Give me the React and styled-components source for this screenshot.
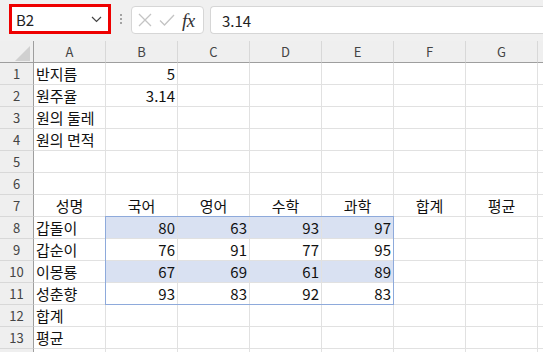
import React from 'react';
import styled, { createGlobalStyle } from 'styled-components';

const GlobalStyle = createGlobalStyle`
  html, body {
    margin: 0;
    padding: 0;
    background: #f0f0f0;
    overflow: hidden;
  }
  * { box-sizing: border-box; }
`;

const FONT = `"Segoe UI", "Noto Sans CJK KR", "Noto Sans", sans-serif`;

const Page = styled.div`
  width: 543px;
  height: 352px;
  overflow: hidden;
  font-family: ${FONT};
`;

const Toolbar = styled.div`
  height: 41px;
  display: flex;
  align-items: flex-start;
  padding: 4px 0 0 9px;
  background: #f0f0f0;
`;

const NameBox = styled.div`
  width: 102px;
  height: 30px;
  border: 3px solid #ee0000;
  background: #fff;
  display: flex;
  align-items: center;
  justify-content: space-between;
  padding: 0 6px 0 4px;
  font-size: 15px;
  color: #222;
`;

const Dots = styled.div`
  width: 20px;
  height: 30px;
  display: flex;
  flex-direction: column;
  align-items: center;
  justify-content: center;
  gap: 2px;
  span {
    width: 2px;
    height: 2px;
    background: #8a8a8a;
    border-radius: 1px;
  }
`;

const ButtonGroup = styled.div`
  width: 73px;
  height: 28px;
  margin-top: 2px;
  border: 1px solid #d6d6d6;
  border-radius: 4px;
  background: #fff;
  display: flex;
  align-items: center;
  padding: 0 4px 0 6px;
  gap: 7px;
`;

const Fx = styled.span`
  font-family: "Liberation Serif", "DejaVu Serif", serif;
  font-style: italic;
  font-size: 19px;
  color: #333;
  margin-left: 0;
  letter-spacing: -0.5px;
  line-height: 1;
`;

const FormulaInput = styled.div`
  flex: 1;
  height: 28px;
  margin: 2px 0 0 6px;
  border: 1px solid #d6d6d6;
  border-right: none;
  border-radius: 4px 0 0 4px;
  background: #fff;
  display: flex;
  align-items: center;
  padding-left: 11px;
  font-size: 15px;
  color: #222;
`;

const GridWrap = styled.div`
  position: relative;
  background: #fff;
`;

const Grid = styled.div`
  display: grid;
  grid-template-columns: 34px repeat(8, 72px);
  grid-auto-rows: 22px;
`;

const Corner = styled.div`
  background: #efefef;
  border-right: 1px solid #9e9e9e;
  border-bottom: 1px solid #9e9e9e;
  position: relative;
  svg { position: absolute; right: 3px; bottom: 1px; }
`;

const ColHead = styled.div`
  background: #efefef;
  border-bottom: 1px solid #9e9e9e;
  border-right: 1px solid #d8d8d8;
  display: flex;
  align-items: center;
  justify-content: center;
  font-size: 13px;
  color: #444;
`;

const RowHead = styled.div`
  background: #efefef;
  border-right: 1px solid #9e9e9e;
  border-bottom: 1px solid #d8d8d8;
  display: flex;
  align-items: center;
  justify-content: center;
  font-size: 13px;
  color: #444;
`;

const Cell = styled.div`
  background: ${p => (p.$band ? '#d9e1f2' : '#fff')};
  border-right: 1px solid #e1e1e1;
  border-bottom: 1px solid #e1e1e1;
  display: flex;
  align-items: center;
  justify-content: ${p => (p.$align === 'right' ? 'flex-end' : p.$align === 'center' ? 'center' : 'flex-start')};
  padding: 0 2px 0 2px;
  font-size: 15px;
  color: #111;
  white-space: nowrap;
  overflow: visible;
  line-height: 21px;
`;

const Selection = styled.div`
  position: absolute;
  left: 105px;
  top: 175px;
  width: 289px;
  height: 89px;
  border: 1px solid #8eaadb;
  pointer-events: none;
`;

const cols = ['A', 'B', 'C', 'D', 'E', 'F', 'G', ''];

const rows = [
  ['반지름', 5],
  ['원주율', 3.14],
  ['원의 둘레'],
  ['원의 면적'],
  [],
  [],
  ['성명', '국어', '영어', '수학', '과학', '합계', '평균'],
  ['갑돌이', 80, 63, 93, 97],
  ['갑순이', 76, 91, 77, 95],
  ['이몽룡', 67, 69, 61, 89],
  ['성춘향', 93, 83, 92, 83],
  ['합계'],
  ['평균'],
  [],
];

const Chevron = () => (
  <svg width="11" height="7" viewBox="0 0 11 7">
    <path d="M1 1 L5.5 5.5 L10 1" fill="none" stroke="#444" strokeWidth="1.2" />
  </svg>
);

const App = () => {
  return (
    <Page>
      <GlobalStyle />
      <Toolbar>
        <NameBox>
          <span>B2</span>
          <Chevron />
        </NameBox>
        <Dots><span /><span /><span /></Dots>
        <ButtonGroup>
          <svg width="14" height="14" viewBox="0 0 14 14">
            <path d="M1 1 L13 13 M13 1 L1 13" stroke="#c4c4c4" strokeWidth="1.3" fill="none" />
          </svg>
          <svg width="16" height="14" viewBox="0 0 16 14">
            <path d="M1 7.5 L5.5 12 L15 2" stroke="#c4c4c4" strokeWidth="1.3" fill="none" />
          </svg>
          <Fx>fx</Fx>
        </ButtonGroup>
        <FormulaInput>3.14</FormulaInput>
      </Toolbar>
      <GridWrap>
        <Grid>
          <Corner>
            <svg width="15" height="15" viewBox="0 0 15 15">
              <polygon points="15,0 15,15 0,15" fill="#d0d0d0" />
            </svg>
          </Corner>
          {cols.map((c, i) => (
            <ColHead key={i}>{c}</ColHead>
          ))}
          {rows.map((r, ri) => {
            const rowNo = ri + 1;
            const header = rowNo === 7;
            const band = rowNo === 8 || rowNo === 10;
            return (
              <React.Fragment key={ri}>
                <RowHead>{rowNo < 14 ? rowNo : ''}</RowHead>
                {cols.map((_, ci) => {
                  const v = r[ci];
                  const isNum = typeof v === 'number';
                  const align = header && v !== undefined ? 'center' : isNum ? 'right' : 'left';
                  return (
                    <Cell key={ci} $align={align} $band={band && ci >= 1 && ci <= 4}>
                      {v !== undefined ? String(v) : ''}
                    </Cell>
                  );
                })}
              </React.Fragment>
            );
          })}
        </Grid>
        <Selection />
      </GridWrap>
    </Page>
  );
};

export default App;
